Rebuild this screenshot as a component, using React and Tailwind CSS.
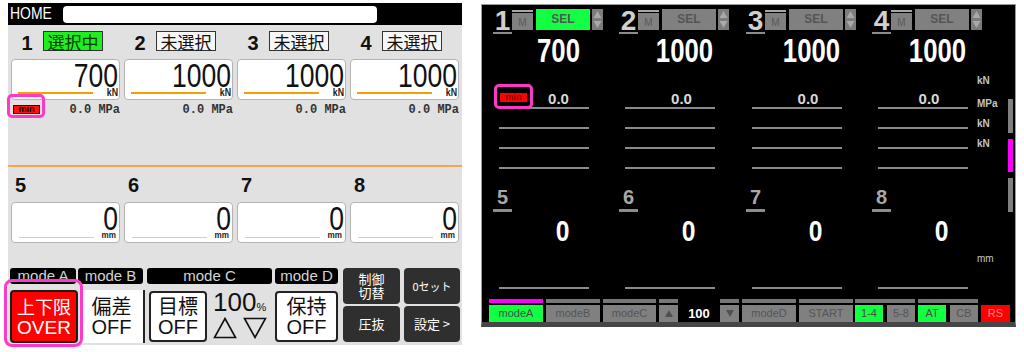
import React from 'react';

const SANS = "font-['Liberation_Sans',Arial,sans-serif]";
const JP = "font-['Noto_Sans_CJK_JP','Noto_Sans',sans-serif]";
const MONO = "font-['Liberation_Mono','DejaVu_Sans_Mono',monospace]";

const topL = [
  { n: '1', badge: '選択中', on: true, v: '700', min: true },
  { n: '2', badge: '未選択', v: '1000' },
  { n: '3', badge: '未選択', v: '1000' },
  { n: '4', badge: '未選択', v: '1000' },
];

const modeLabels = [
  { t: 'mode A', cls: 'w-[66px]' },
  { t: 'mode B', cls: 'ml-[2px] w-[65px]' },
  { t: 'mode C', cls: 'ml-[4px] w-[125px]' },
  { t: 'mode D', cls: 'ml-[3px] w-[63px]' },
];

function Triangle({ down }) {
  return (
    <svg width="24" height="22" viewBox="0 0 24 22">
      <polygon
        points={down ? '1.5,1.5 22.5,1.5 12,20.5' : '12,1.5 22.5,20.5 1.5,20.5'}
        fill="none"
        stroke="#111"
        strokeWidth="1.6"
      />
    </svg>
  );
}

function LeftPanel() {
  return (
    <div className={`ml-[8px] mt-[3px] flex h-[342px] w-[454px] shrink-0 flex-col bg-[#e1e1e1] ${SANS}`}>
      {/* title bar */}
      <div className="flex h-[22px] shrink-0 items-center bg-black">
        <span className="ml-[2px] w-[53px] origin-left scale-x-[0.82] text-[17px] leading-[22px] text-white">HOME</span>
        <div className="h-[17px] w-[314px] rounded-[4px] bg-white" />
      </div>

      {/* load channels 1-4 */}
      <div className="grid grid-cols-4 gap-x-[4px] px-[3px] pt-[6px]">
        {topL.map((c) => (
          <div key={c.n} className="flex flex-col">
            <div className="flex h-[20px] items-start">
              <span className="mt-[2px] w-[32px] text-center text-[20px] font-bold leading-[20px] text-[#111]">{c.n}</span>
              <span
                className={`h-[20px] w-[60px] border border-[#333] pt-[1px] text-center text-[17px] leading-[18px] ${JP} ${
                  c.on ? 'bg-[#1ef01e] text-[#053805]' : 'bg-[#f6f6f6] text-[#111]'
                }`}
              >
                {c.badge}
              </span>
            </div>
            <div className="mt-[8px] flex h-[41px] flex-col rounded-[4px] border border-[#b4b4b4] bg-white pr-[1px] pt-[3px]">
              <span className="origin-right scale-x-[0.78] text-right text-[34px] leading-[25px] text-[#111]">{c.v}</span>
              <div className="flex h-[9px] items-start">
                <div className="ml-[6px] mt-[4px] h-[2px] w-[75px] bg-[#f5a000]" />
                <span className="ml-auto origin-right scale-x-[0.8] text-[11px] font-bold leading-[9px] text-[#222]">kN</span>
              </div>
            </div>
            <div className="relative mt-[3px] flex h-[14px] items-start">
              {c.min && (
                <>
                  <span className="ml-[2px] mt-[2px] h-[9px] w-[27px] border border-[#500] bg-[#ff1010] text-center text-[9px] font-bold leading-[7px] text-black">
                    min
                  </span>
                  <div className="pointer-events-none absolute -left-[4px] -top-[9px] h-[24px] w-[38px] rounded-[5px] border-[3px] border-[#ff38c8]" />
                </>
              )}
              <span className={`ml-auto text-[12px] font-bold leading-[14px] text-[#333] ${MONO}`}>0.0 MPa</span>
            </div>
          </div>
        ))}
      </div>

      <div className="mt-[48px] h-[2px] shrink-0 bg-[#f5a552]" />

      {/* stroke channels 5-8 */}
      <div className="grid grid-cols-4 gap-x-[4px] px-[3px]">
        {['5', '6', '7', '8'].map((n) => (
          <div key={n} className="flex flex-col">
            <span className="mt-[8px] pl-[4px] text-[20px] font-bold leading-[20px] text-[#111]">{n}</span>
            <div className="mt-[7px] flex h-[41px] flex-col rounded-[4px] border border-[#b4b4b4] bg-white pr-[1px] pt-[3px]">
              <span className="origin-right scale-x-[0.78] text-right text-[34px] leading-[25px] text-[#111]">0</span>
              <div className="flex h-[9px] items-start">
                <div className="ml-[7px] mt-[6px] h-[1px] w-[75px] bg-[#cfcfcf]" />
                <span className="ml-auto mr-[2px] origin-right scale-x-[0.9] text-[9px] font-bold leading-[9px] text-[#222]">mm</span>
              </div>
            </div>
          </div>
        ))}
      </div>

      {/* mode buttons */}
      <div className="relative mt-[25px] flex pl-[2px]">
        <div className="flex w-[328px] flex-col">
          <div className="flex h-[16px]">
            {modeLabels.map((m) => (
              <div key={m.t} className={`rounded-[3px] bg-black text-center text-[15px] leading-[16px] text-[#d4d4d4] ${m.cls}`}>
                {m.t}
              </div>
            ))}
          </div>
          <div className="mt-[6px] flex items-start">
            <div className="flex h-[53px] w-[68px] flex-col items-center justify-center rounded-[4px] border-2 border-[#1c1c1c] bg-[#ff0000] text-white">
              <span className={`text-[18px] leading-[22px] ${JP}`}>上下限</span>
              <span className="text-[19px] leading-[21px]">OVER</span>
            </div>
            <div className="ml-[2px] flex h-[53px] w-[65px] flex-col items-center justify-center border-r-2 border-[#222] bg-white text-[#111]">
              <span className={`text-[20px] leading-[22px] ${JP}`}>偏差</span>
              <span className="text-[20px] leading-[21px]">OFF</span>
            </div>
            <div className="ml-[4px] mt-[1px] flex h-[51px] w-[58px] flex-col items-center justify-center rounded-[4px] border-2 border-[#222] bg-white text-[#111]">
              <span className={`text-[20px] leading-[22px] ${JP}`}>目標</span>
              <span className="text-[20px] leading-[21px]">OFF</span>
            </div>
            <div className="ml-[4px] flex w-[61px] flex-col">
              <div className="flex items-baseline pl-[2px]">
                <span className="text-[26px] leading-[24px] text-[#111]">100</span>
                <span className="text-[11px] leading-[11px] text-[#111]">%</span>
              </div>
              <div className="mt-[3px] flex gap-[6px] pl-[2px]">
                <Triangle />
                <Triangle down />
              </div>
            </div>
            <div className="ml-[3px] mt-[1px] flex h-[51px] w-[63px] flex-col items-center justify-center rounded-[4px] border-2 border-[#222] bg-white text-[#111]">
              <span className={`text-[20px] leading-[22px] ${JP}`}>保持</span>
              <span className="text-[20px] leading-[21px]">OFF</span>
            </div>
          </div>
        </div>
        <div className={`ml-[5px] grid grid-cols-[57px_56px] grid-rows-[36px_36px] gap-x-[4px] gap-y-[2px] text-white ${JP}`}>
          <div className="flex flex-col items-center justify-center rounded-[4px] bg-[#2f2f2f] text-[13px] leading-[14px]">
            <span>制御</span>
            <span>切替</span>
          </div>
          <div className="flex items-center justify-center rounded-[4px] bg-[#2f2f2f] text-[11px]">0セット</div>
          <div className="flex items-center justify-center rounded-[4px] bg-[#2f2f2f] text-[13px]">圧抜</div>
          <div className="flex items-center justify-center rounded-[4px] bg-[#2f2f2f] text-[13px]">設定 &gt;</div>
        </div>
        <div className="pointer-events-none absolute left-[-4px] top-[11px] h-[68px] w-[79px] rounded-[8px] border-[3px] border-[#ff38c8]" />
      </div>
    </div>
  );
}

function UpDown() {
  return (
    <svg width="11" height="21" viewBox="0 0 11 21" className="ml-[2px]">
      <rect width="11" height="21" fill="#7c7c7c" />
      <path d="M5.5 2 L9.5 9 H1.5 Z" fill="#a9a9a9" />
      <path d="M5.5 19 L9.5 12 H1.5 Z" fill="#a9a9a9" />
    </svg>
  );
}

const topR = [
  { n: '1', v: '700', on: true, min: true, w: 'w-[126px]' },
  { n: '2', v: '1000', w: 'w-[127px]' },
  { n: '3', v: '1000', w: 'w-[126px]' },
  { n: '4', v: '1000', w: 'w-[116px]' },
];

const botR = [
  { n: '5', w: 'w-[126px]' },
  { n: '6', w: 'w-[127px]' },
  { n: '7', w: 'w-[126px]' },
  { n: '8', w: 'w-[116px]' },
];

function Line({ cls }) {
  return <div className={`ml-[7px] h-[2px] w-[90px] bg-[#8a8a8a] ${cls}`} />;
}

function BarBtn({ cls, strip, bg, color, children }) {
  return (
    <div className={`flex flex-col ${cls}`}>
      <div className={`h-[4px] ${strip}`} />
      <div className={`mt-[2px] flex h-[17px] items-center justify-center text-[11px] leading-[17px] ${bg} ${color}`}>{children}</div>
    </div>
  );
}

function Tri({ down }) {
  return (
    <svg width="10" height="9" viewBox="0 0 10 9">
      <path d={down ? 'M1 1 H9 L5 8 Z' : 'M5 1 L9 8 H1 Z'} fill="#505050" />
    </svg>
  );
}

function RightPanel() {
  return (
    <div
      className={`ml-[19px] mt-[4px] flex h-[323px] w-[535px] shrink-0 flex-col border-x border-t border-[#9a9a9a] border-b-[5px] border-b-[#464646] bg-black ${SANS}`}
    >
      <div className="flex h-[294px]">
        <div className="flex w-[495px] flex-col pl-[10px]">
          <div className="flex pt-[4px]">
            {topR.map((c) => (
              <div key={c.n} className={`flex shrink-0 flex-col ${c.w}`}>
                <div className="flex h-[25px] items-start">
                  <span className="ml-[1px] h-[25px] w-[19px] border-b-[2px] border-[#8c8c8c] text-center text-[28px] font-bold leading-[23px] text-[#cfcfcf]">
                    {c.n}
                  </span>
                  <div className="flex w-[21px] flex-col">
                    <div className="mt-[1px] h-[2px] bg-[#a6a6a6]" />
                    <div className="mt-[1px] flex h-[17px] items-end justify-center bg-[#808080] text-[10px] leading-[14px] text-[#5a5a5a]">M</div>
                  </div>
                  <div
                    className={`ml-[3px] h-[21px] w-[54px] text-center text-[12px] font-bold leading-[21px] text-[#555] ${
                      c.on ? 'bg-[#12ff42]' : 'bg-[#808080]'
                    }`}
                  >
                    SEL
                  </div>
                  <UpDown />
                </div>
                <span className="w-[133px] origin-center scale-x-[0.78] text-center text-[33px] font-bold leading-[33px] text-white">{c.v}</span>
                <div className="relative mt-[24px] flex h-[15px] items-start">
                  {c.min ? (
                    <>
                      <span className="ml-[8px] mt-[2px] h-[9px] w-[27px] bg-[#ff0000] text-center text-[9px] font-bold leading-[9px] text-[#7a0000]">min</span>
                      <span className="w-[63px] text-center text-[15px] font-bold leading-[15px] text-[#d8d8d8]">0.0</span>
                      <div className="pointer-events-none absolute left-[2px] top-[-7px] h-[25px] w-[39px] rounded-[5px] border-[3px] border-[#ff38c8]" />
                    </>
                  ) : (
                    <span className="w-[133px] text-center text-[15px] font-bold leading-[15px] text-[#d8d8d8]">0.0</span>
                  )}
                </div>
                <Line cls="mt-[1px]" />
                <Line cls="mt-[18px]" />
                <Line cls="mt-[18px]" />
                <Line cls="mt-[18px]" />
              </div>
            ))}
          </div>
          <div className="flex">
            {botR.map((c) => (
              <div key={c.n} className={`flex shrink-0 flex-col ${c.w}`}>
                <span className="ml-[1px] mt-[18px] h-[25px] w-[19px] border-b-[3px] border-[#8c8c8c] text-center text-[20px] font-bold leading-[20px] text-[#a8a8a8]">
                  {c.n}
                </span>
                <span className="mt-[4px] w-[141px] origin-center scale-x-[0.82] text-center text-[30px] font-bold leading-[30px] text-white">0</span>
                <Line cls="mt-[41px]" />
              </div>
            ))}
          </div>
        </div>

        {/* unit labels */}
        <div className="flex w-[26px] flex-col pt-[66px] text-[10px] font-bold leading-[20px] text-[#c4c4c4]">
          <span className="mb-[3px]">kN</span>
          <span>MPa</span>
          <span>kN</span>
          <span>kN</span>
          <span className="mt-[95px] font-normal">mm</span>
        </div>

        {/* page indicator */}
        <div className="ml-[5px] flex w-[5px] flex-col pt-[94px]">
          <div className="h-[34px] bg-[#808080]" />
          <div className="mt-[6px] h-[33px] bg-[#ff00ff]" />
          <div className="mt-[6px] h-[34px] bg-[#808080]" />
        </div>
      </div>

      {/* bottom bar */}
      <div className="flex h-[23px] items-start pl-[7px]">
        <BarBtn cls="w-[54px]" strip="bg-[#ff00ff]" bg="bg-[#12ff42]" color="text-[#4a4a4a]">modeA</BarBtn>
        <BarBtn cls="ml-[3px] w-[54px]" strip="bg-[#777]" bg="bg-[#808080]" color="text-[#555]">modeB</BarBtn>
        <BarBtn cls="ml-[3px] w-[53px]" strip="bg-[#777]" bg="bg-[#808080]" color="text-[#555]">modeC</BarBtn>
        <BarBtn cls="ml-[3px] w-[19px]" strip="bg-[#777]" bg="bg-[#808080]" color="">
          <Tri />
        </BarBtn>
        <div className="mt-[6px] w-[42px] text-center text-[13px] font-bold leading-[17px] text-white">100</div>
        <BarBtn cls="w-[19px]" strip="bg-[#777]" bg="bg-[#808080]" color="">
          <Tri down />
        </BarBtn>
        <BarBtn cls="ml-[3px] w-[54px]" strip="bg-[#777]" bg="bg-[#808080]" color="text-[#555]">modeD</BarBtn>
        <BarBtn cls="ml-[3px] w-[54px]" strip="bg-[#777]" bg="bg-[#808080]" color="text-[#555]">START</BarBtn>
        <div className="ml-[2px] flex w-[60px] flex-col">
          <div className="h-[4px] bg-[#777]" />
          <div className="mt-[2px] flex h-[17px] gap-[4px] text-[11px] leading-[17px]">
            <span className="w-[28px] bg-[#12ff42] text-center text-[#4a4a4a]">1-4</span>
            <span className="w-[28px] bg-[#808080] text-center text-[#555]">5-8</span>
          </div>
        </div>
        <div className="ml-[3px] flex w-[60px] flex-col">
          <div className="h-[4px] bg-[#777]" />
          <div className="mt-[2px] flex h-[17px] gap-[4px] text-[11px] leading-[17px]">
            <span className="w-[28px] bg-[#12ff42] text-center text-[#4a4a4a]">AT</span>
            <span className="w-[28px] bg-[#808080] text-center text-[#555]">CB</span>
          </div>
        </div>
        <BarBtn cls="ml-[3px] w-[29px]" strip="" bg="bg-[#ff0000]" color="text-[#ff8080]">RS</BarBtn>
      </div>
    </div>
  );
}

export default function App() {
  return (
    <div className="flex h-[352px] w-[1024px] items-start overflow-hidden bg-white">
      <LeftPanel />
      <RightPanel />
    </div>
  );
}
